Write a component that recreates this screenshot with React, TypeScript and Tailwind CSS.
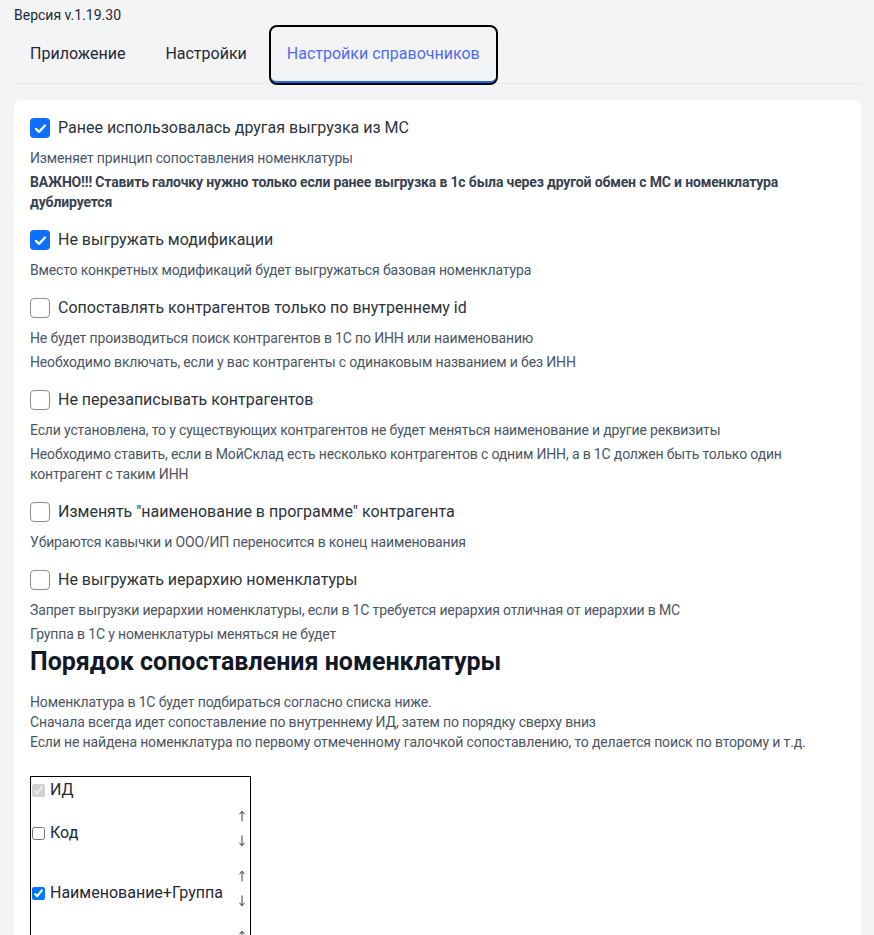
import { useState } from "react";

type Setting = {
  label: string;
  checked: boolean;
  notes: { text: string; bold?: boolean }[];
};

const settings: Setting[] = [
  {
    label: "Ранее использовалась другая выгрузка из МС",
    checked: true,
    notes: [
      { text: "Изменяет принцип сопоставления номенклатуры" },
      {
        text: "ВАЖНО!!! Ставить галочку нужно только если ранее выгрузка в 1с была через другой обмен с МС и номенклатура дублируется",
        bold: true,
      },
    ],
  },
  {
    label: "Не выгружать модификации",
    checked: true,
    notes: [{ text: "Вместо конкретных модификаций будет выгружаться базовая номенклатура" }],
  },
  {
    label: "Сопоставлять контрагентов только по внутреннему id",
    checked: false,
    notes: [
      { text: "Не будет производиться поиск контрагентов в 1С по ИНН или наименованию" },
      { text: "Необходимо включать, если у вас контрагенты с одинаковым названием и без ИНН" },
    ],
  },
  {
    label: "Не перезаписывать контрагентов",
    checked: false,
    notes: [
      { text: "Если установлена, то у существующих контрагентов не будет меняться наименование и другие реквизиты" },
      {
        text: "Необходимо ставить, если в МойСклад есть несколько контрагентов с одним ИНН, а в 1С должен быть только один контрагент с таким ИНН",
      },
    ],
  },
  {
    label: 'Изменять "наименование в программе" контрагента',
    checked: false,
    notes: [{ text: "Убираются кавычки и ООО/ИП переносится в конец наименования" }],
  },
  {
    label: "Не выгружать иерархию номенклатуры",
    checked: false,
    notes: [
      { text: "Запрет выгрузки иерархии номенклатуры, если в 1С требуется иерархия отличная от иерархии в МС" },
      { text: "Группа в 1С у номенклатуры меняться не будет" },
    ],
  },
];

const tabs = ["Приложение", "Настройки", "Настройки справочников"];

// пункты порядка сопоставления
const matchOrder = [
  { name: "Код", checked: false },
  { name: "Наименование+Группа", checked: true },
  { name: "Артикул", checked: false },
];

const CheckBox = ({ checked, onClick }: { checked: boolean; onClick: () => void }) => (
  <span
    onClick={onClick}
    className={
      checked
        ? "w-5 h-5 shrink-0 rounded-[4px] bg-[#0d6efd] flex items-center justify-center cursor-pointer"
        : "w-5 h-5 shrink-0 rounded-[4px] border border-[#8f8f8f] bg-white cursor-pointer"
    }
  >
    {checked && (
      <svg viewBox="0 0 20 20" className="w-[15px] h-[15px]">
        <path d="M4 10.5l4 4 8-8.5" fill="none" stroke="white" strokeWidth="3" strokeLinecap="round" strokeLinejoin="round" />
      </svg>
    )}
  </span>
);

const Arrow = ({ down }: { down?: boolean }) => (
  <svg viewBox="0 0 8 12" className={down ? "w-2 h-3 rotate-180" : "w-2 h-3"}>
    <path d="M4 1.5V11.5M1.5 4.2L4 1.2L6.5 4.2" fill="none" stroke="#3a3a3a" strokeWidth="1" />
  </svg>
);

export default function App() {
  const [values, setValues] = useState(settings.map((s) => s.checked));
  const [order, setOrder] = useState(matchOrder);

  return (
    <div className="min-h-screen bg-[#f3f4f6] pl-[14px] pr-[13px] pt-[5px] font-['Roboto',sans-serif] text-[#1f2937]">
      <div className="text-sm leading-5 text-[#1f2937]">Версия v.1.19.30</div>

      {/* Вкладки */}
      <div className="mt-[2px] flex gap-2 border-b border-[#e5e7eb]">
        {tabs.map((t, i) =>
          i === 2 ? (
            <div
              key={t}
              className="px-4 py-[15px] text-base leading-6 text-[#4f6bf5] border-b-2 border-[#2563eb] outline-2 outline-black rounded-md"
            >
              {t}
            </div>
          ) : (
            <div key={t} className="px-4 py-[15px] text-base leading-6 text-[#1f2937] border-b-2 border-transparent">
              {t}
            </div>
          )
        )}
      </div>

      <div className="mt-4 bg-white rounded-lg px-4 pt-4 pb-10">
        <div className="flex flex-col gap-3">
          {settings.map((s, i) => (
            <div key={s.label}>
              <label className="flex items-center gap-2 h-6 mb-2 text-base text-[#2d333a]">
                <CheckBox
                  checked={values[i]}
                  onClick={() => setValues(values.map((v, j) => (j === i ? !v : v)))}
                />
                {s.label}
              </label>
              {s.notes.map((n) => (
                <p
                  key={n.text}
                  className={
                    n.bold
                      ? "text-sm leading-5 mb-1 font-bold text-[#374151] tracking-[-0.15px]"
                      : "text-sm leading-5 mb-1 text-[#4b5563] tracking-[-0.15px]"
                  }
                >
                  {n.text}
                </p>
              ))}
            </div>
          ))}
        </div>

        <h2 className="text-[25px] leading-7 font-bold text-[#111827] mb-4">Порядок сопоставления номенклатуры</h2>
        <p className="text-sm leading-5 text-[#4b5563] mb-6 tracking-[-0.15px]">
          Номенклатура в 1С будет подбираться согласно списка ниже.
          <br />
          Сначала всегда идет сопоставление по внутреннему ИД, затем по порядку сверху вниз
          <br />
          Если не найдена номенклатура по первому отмеченному галочкой сопоставлению, то делается поиск по второму и т.д.
        </p>

        <div className="w-[221px] border border-black">
          <div className="h-[26px] flex items-center text-base text-[#1f2937]">
            <input type="checkbox" checked disabled readOnly className="m-0 ml-px mr-[5px] w-[13px] h-[13px]" />
            ИД
          </div>
          {order.map((item, i) => (
            <div key={item.name} className="flex justify-between mb-[10px]">
              <label className="flex items-center pt-[18px] h-[42px] text-base text-[#1f2937]">
                <input
                  type="checkbox"
                  checked={item.checked}
                  onChange={() => setOrder(order.map((o, j) => (j === i ? { ...o, checked: !o.checked } : o)))}
                  className="m-0 ml-px mr-[5px] w-[13px] h-[13px] accent-[#0075ff]"
                />
                {item.name}
              </label>
              <div className="flex flex-col pr-[4px]">
                <span className="h-[25px] flex items-center">
                  <Arrow />
                </span>
                <span className="h-[25px] flex items-center">
                  <Arrow down />
                </span>
              </div>
            </div>
          ))}
        </div>
      </div>
    </div>
  );
}
